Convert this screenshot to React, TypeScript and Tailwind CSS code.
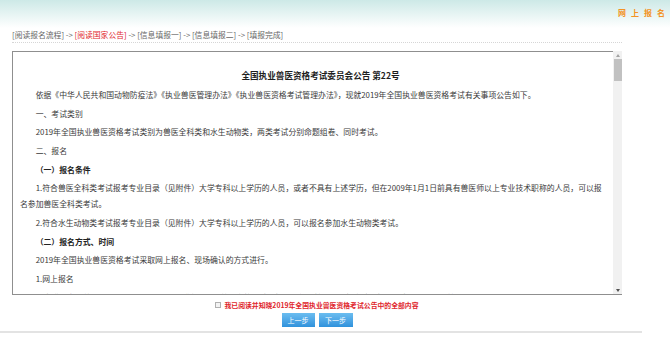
const paragraphs: { text: string; bold?: boolean }[] = [
  { text: "依据《中华人民共和国动物防疫法》《执业兽医管理办法》《执业兽医资格考试管理办法》，现就2019年全国执业兽医资格考试有关事项公告如下。" },
  { text: "一、考试类别" },
  { text: "2019年全国执业兽医资格考试类别为兽医全科类和水生动物类，两类考试分别命题组卷、同时考试。" },
  { text: "二、报名" },
  { text: "（一）报名条件", bold: true },
  { text: "1.符合兽医全科类考试报考专业目录（见附件）大学专科以上学历的人员，或者不具有上述学历，但在2009年1月1日前具有兽医师以上专业技术职称的人员，可以报名参加兽医全科类考试。" },
  { text: "2.符合水生动物类考试报考专业目录（见附件）大学专科以上学历的人员，可以报名参加水生动物类考试。" },
  { text: "（二）报名方式、时间", bold: true },
  { text: "2019年全国执业兽医资格考试采取网上报名、现场确认的方式进行。" },
  { text: "1.网上报名" },
  { text: "考生登录中国兽医网（www.cadc.net.cn）“全国执业兽医资格考试”报名专栏，按照要求如实填写报名信息并上传照片等材料。" },
];

const steps = ["[阅读报名流程]", "[阅读国家公告]", "[信息填报一]", "[信息填报二]", "[填报完成]"];

export default function App() {
  return (
    <div className="w-[670px] h-[337px] overflow-hidden bg-white font-['Noto_Sans_CJK_SC',sans-serif] text-[#3a3a3a]">
      {/* header */}
      <div className="h-[28px] bg-linear-to-b from-[#cde9e7] to-white flex justify-end items-start pt-[8px]">
        <span className="text-[8px] leading-[10px] font-bold text-[#f39325] tracking-[5px]">网上报名</span>
      </div>

      {/* steps */}
      <div className="ml-[12px] w-[610px] h-[15px] border-b border-dotted border-[#d6d6d6] flex items-center text-[7.8px] leading-none text-[#666] whitespace-pre">
        {steps.map((s, i) => (
          <span key={s} className="flex items-center">
            <span className={i === 1 ? "text-[#e1262d]" : ""}>{s}</span>
            {i < steps.length - 1 && <span>{" -> "}</span>}
          </span>
        ))}
      </div>

      {/* notice box */}
      <div className="ml-[12px] mt-[8px] w-[610px] h-[244px] flex border-l border-b border-[#8f8f8f]">
        <div className="flex-1 overflow-hidden border-t border-[#8f8f8f] pl-[7px] pr-[9px] pt-[14px] text-[7.85px] leading-[16px]">
          <p className="text-center font-bold text-[8.6px] text-[#1e1e1e] pl-[17px] leading-[18px]">
            全国执业兽医资格考试委员会公告 第22号
          </p>
          <div className="mt-[3px] flex flex-col gap-[2.67px]">
            {paragraphs.map((p) => (
              <p key={p.text} className={`indent-[2em] ${p.bold ? "font-bold text-[#222]" : ""}`}>
                {p.text}
              </p>
            ))}
          </div>
        </div>
        <div className="w-[9px] bg-[#f1f1f1] flex flex-col items-center">
          <div className="h-[8px] flex items-center justify-center">
            <span className="w-0 h-0 border-l-[2px] border-r-[2px] border-b-[3px] border-l-transparent border-r-transparent border-b-[#a3a3a3]" />
          </div>
          <div className="w-[8px] h-[22px] bg-[#c1c1c1]" />
          <div className="flex-1" />
          <div className="h-[8px] flex items-center justify-center">
            <span className="w-0 h-0 border-l-[2px] border-r-[2px] border-t-[3px] border-l-transparent border-r-transparent border-t-[#505050]" />
          </div>
        </div>
      </div>

      {/* agree + buttons */}
      <div className="ml-[12px] w-[610px] flex flex-col items-center">
        <div className="h-[16px] mt-[2px] flex items-center gap-[3px]">
          <span className="w-[6px] h-[6px] border border-[#b0b0b0] bg-[#f3f3f3]" />
          <span className="text-[6.85px] leading-none font-bold text-[#e0262c]">
            我已阅读并知晓2019年全国执业兽医资格考试公告中的全部内容
          </span>
        </div>
        <div className="flex gap-[4px]">
          <button className="w-[33px] h-[14px] bg-linear-to-b from-[#6bbdf0] to-[#2f92dc] text-white text-[7px] leading-none">
            上一步
          </button>
          <button className="w-[34px] h-[14px] bg-linear-to-b from-[#6bbdf0] to-[#2f92dc] text-white text-[7px] leading-none">
            下一步
          </button>
        </div>
      </div>

      <div className="mt-[4px] w-[642px] h-[2px] bg-[#e3e3e3]" />
    </div>
  );
}
